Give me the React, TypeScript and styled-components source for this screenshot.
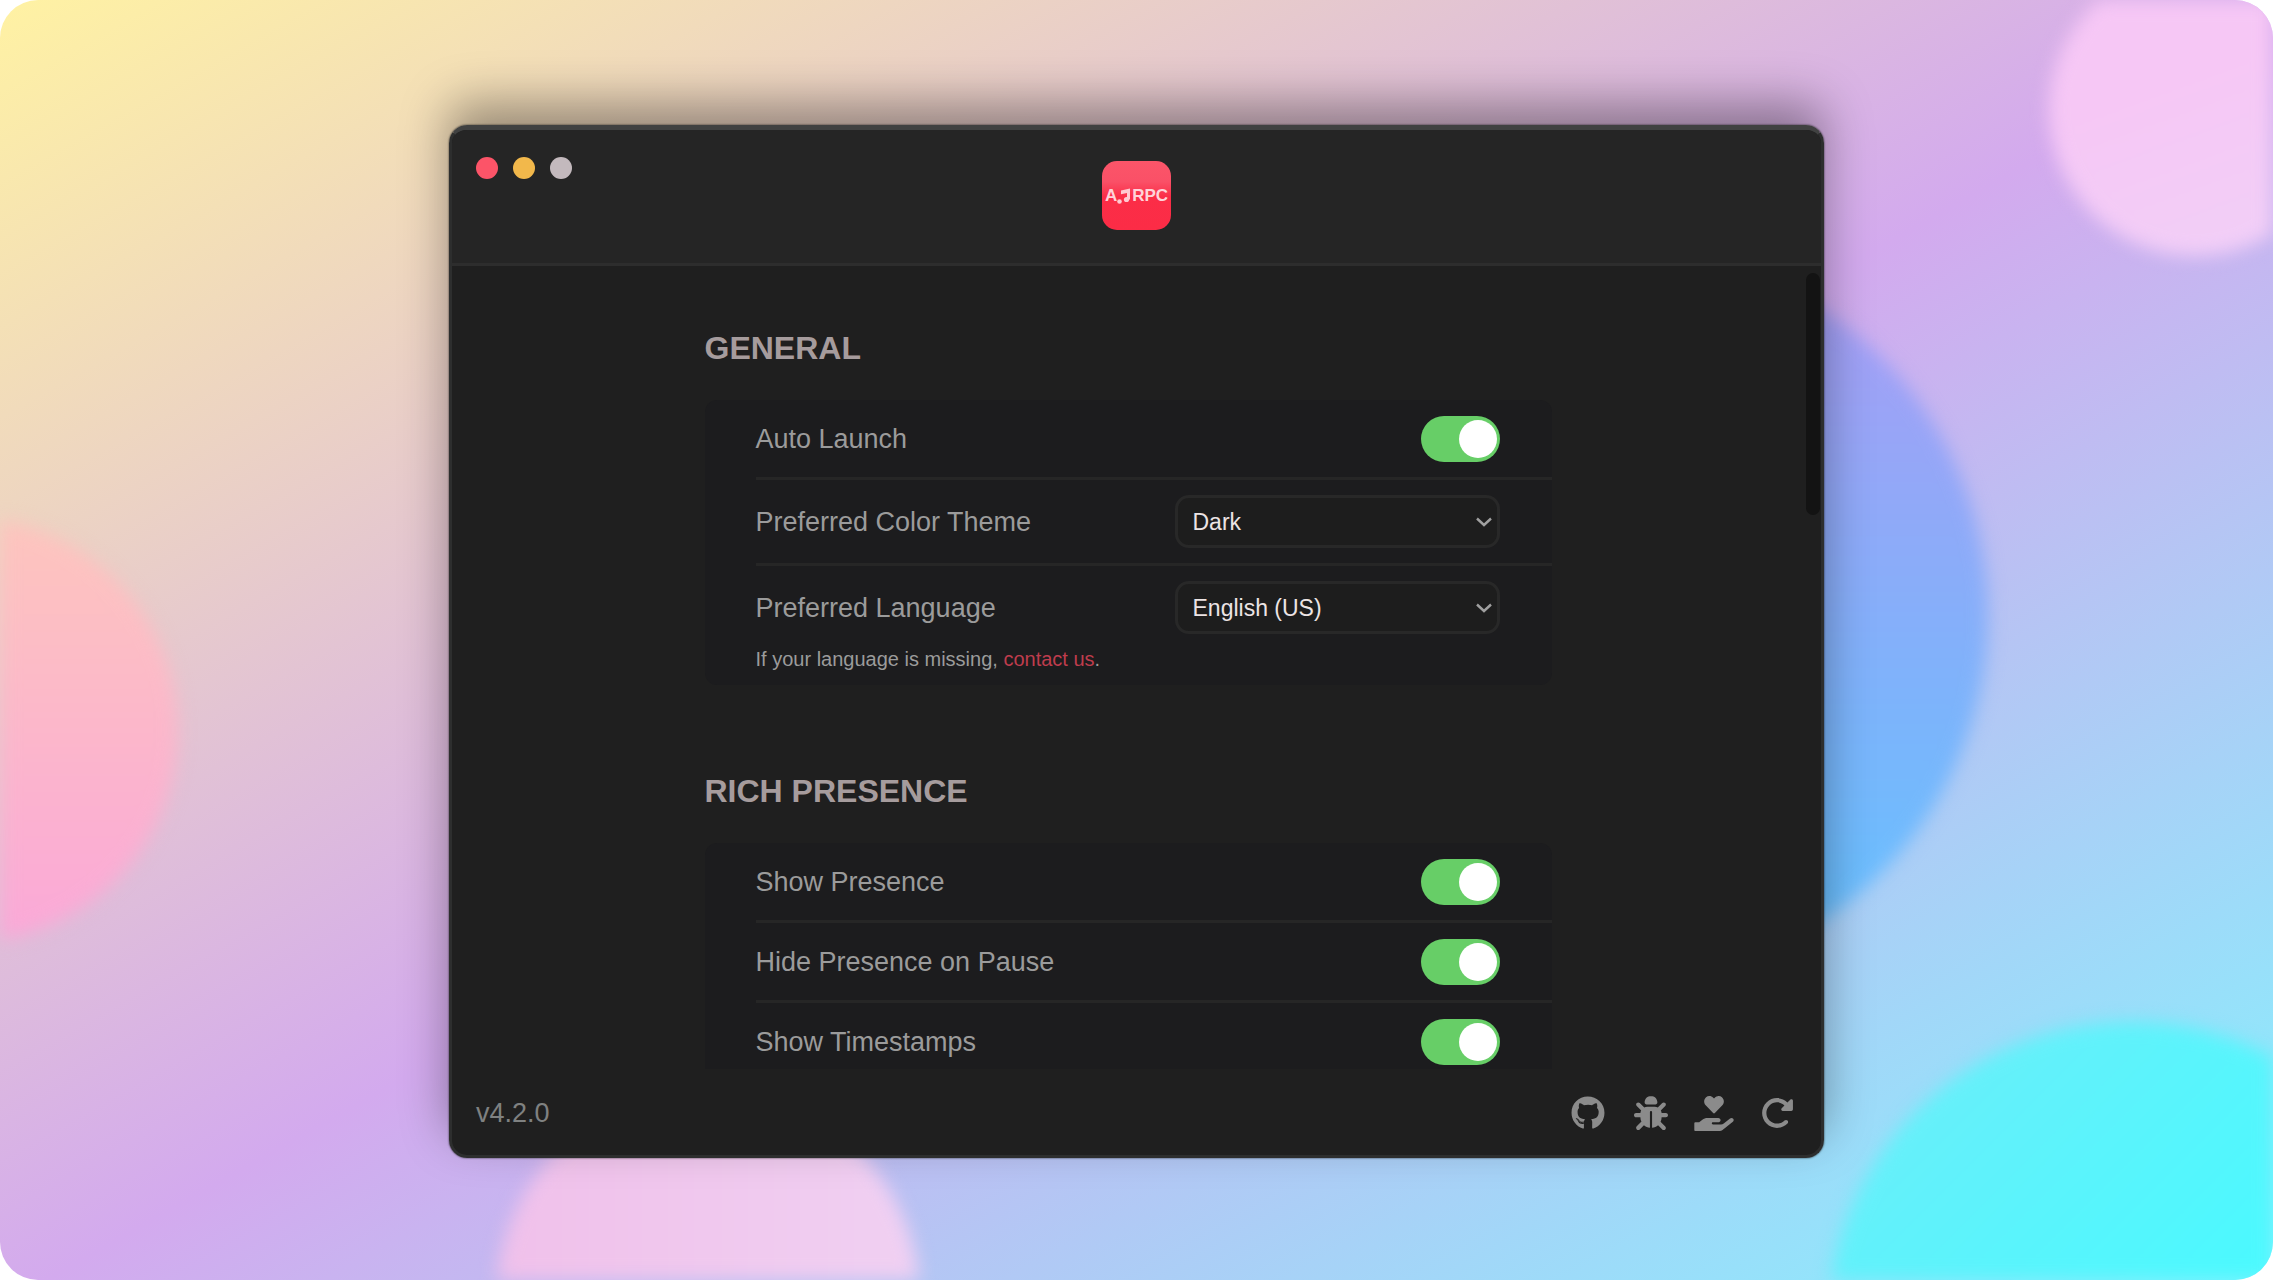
import React from "react";
import styled, { createGlobalStyle } from "styled-components";
import { FaHandHoldingHeart } from "react-icons/fa";
import { FaBug, FaGithub, FaRotateRight } from "react-icons/fa6";

const GlobalStyle = createGlobalStyle`
  *, *::before, *::after { box-sizing: border-box; }
  body {
    margin: 0;
    background: #fff;
    font-family: "Liberation Sans", Arial, Helvetica, sans-serif;
  }
`;

const Backdrop = styled.main`
  position: relative;
  display: flex;
  justify-content: center;
  min-height: 100vh;
  padding: 125px 40px 122px;
  overflow: hidden;
  border-radius: 38px;
  background: linear-gradient(to bottom right, #fff2a3 0%, #d3aaee 51%, #84f2fe 100%);
`;

const BlobLayer = styled.div`
  position: absolute;
  inset: 0;
  overflow: hidden;
  filter: blur(9px);
`;

const Blob = styled.span<{ $size: number; $fill: string }>`
  position: absolute;
  width: ${(p) => p.$size}px;
  height: ${(p) => p.$size}px;
  border-radius: 50%;
  background: ${(p) => p.$fill};
`;

const TopBlob = styled(Blob)`
  top: -36px;
  right: -68px;
`;

const BlueBlob = styled(Blob)`
  top: 251px;
  right: 285px;
`;

const LeftBlob = styled(Blob)`
  top: 517px;
  left: -248px;
`;

const BottomBlob = styled(Blob)`
  bottom: -232px;
  left: 496px;
`;

const CyanBlob = styled(Blob)`
  right: -161px;
  bottom: -348px;
`;

const Frame = styled.div`
  position: relative;
  width: 100%;
  max-width: 1375px;
  border-radius: 18px;
  box-shadow: 0 -22px 48px rgba(0, 0, 0, 0.36), 0 0 2px rgba(0, 0, 0, 0.8);
`;

const Window = styled.section`
  display: flex;
  flex-direction: column;
  height: calc(100vh - 247px);
  overflow: hidden;
  border: 3px solid #2d2e2e;
  border-top: 5px solid #404141;
  border-radius: 18px;
  background: #1f1f1f;
`;

const TitleBar = styled.header`
  display: grid;
  grid-template-columns: 1fr auto 1fr;
  align-items: start;
  flex: none;
  height: 136px;
  padding: 27px 24px 0;
  border-bottom: 3px solid #2d2d2d;
  background: #252525;
`;

const Lights = styled.div`
  display: flex;
  gap: 15px;
`;

const Light = styled.button<{ $color: string }>`
  width: 22px;
  height: 22px;
  padding: 0;
  border: 0;
  border-radius: 50%;
  background: ${(p) => p.$color};
`;

const Logo = styled.div`
  display: flex;
  align-items: center;
  justify-content: center;
  width: 69px;
  height: 69px;
  margin-top: 4px;
  border-radius: 15px;
  background: linear-gradient(#fb5569 0%, #fa5067 30%, #fb2d47 52%, #fc2c46 100%);
  color: #ffd3da;
  font-size: 17px;
  font-weight: 700;
  line-height: 20px;
`;

const Note = styled.svg`
  flex: none;
  width: 15px;
  height: 18px;
`;

const Viewport = styled.div`
  display: flex;
  flex: 1;
  min-height: 0;
  overflow: hidden;
`;

const Content = styled.div`
  display: flex;
  flex: 1;
  flex-direction: column;
  align-items: center;
  gap: 88px;
  padding-top: 64px;
`;

const Track = styled.div`
  flex: none;
  width: 17px;
  padding: 7px 1px 0 2px;
`;

const Thumb = styled.div`
  height: 242px;
  border-radius: 7px;
  background: #131313;
`;

const Section = styled.section`
  width: 847px;
  max-width: 100%;
`;

const SectionTitle = styled.h2`
  margin: 0 0 34px;
  color: #a69c9d;
  font-size: 32px;
  font-weight: 700;
  line-height: 36px;
`;

const Card = styled.div`
  padding-left: 51px;
  border-radius: 12px;
  background: #1c1c1e;
`;

const Row = styled.div`
  display: flex;
  align-items: center;
  justify-content: space-between;
  min-height: 77px;
  padding: 15px 52px 15px 0;

  & + & {
    border-top: 3px solid #262626;
    min-height: 80px;
  }
`;

const Label = styled.label`
  color: #9b9b9b;
  font-size: 27px;
  line-height: 32px;
`;

const Switch = styled.input`
  display: flex;
  justify-content: flex-start;
  width: 79px;
  height: 46px;
  margin: 0;
  padding: 4px 3px;
  border-radius: 23px;
  appearance: none;
  background: #424244;

  &::before {
    width: 38px;
    height: 38px;
    border-radius: 50%;
    background: #fff;
    content: "";
  }

  &:checked {
    justify-content: flex-end;
    background: #67ce67;
  }
`;

const SelectBox = styled.div`
  display: grid;
  align-items: center;
  width: 325px;
  height: 53px;
`;

const Select = styled.select`
  grid-area: 1 / 1;
  width: 100%;
  height: 53px;
  padding: 0 40px 0 15px;
  border: 3px solid #282828;
  border-radius: 14px;
  appearance: none;
  background: #1d1d1d;
  color: #ece4e4;
  font-family: inherit;
  font-size: 23px;
`;

const Chevron = styled.svg`
  grid-area: 1 / 1;
  justify-self: end;
  width: 16px;
  height: 10px;
  margin-right: 8px;
  pointer-events: none;
`;

const Hint = styled.p`
  margin: 0;
  padding-bottom: 16px;
  color: #9b9b9b;
  font-size: 20px;
  line-height: 20px;
`;

const HintLink = styled.a`
  color: #bf3c4d;
  text-decoration: none;
`;

const StatusBar = styled.footer`
  display: flex;
  align-items: center;
  justify-content: space-between;
  flex: none;
  height: 86px;
  padding: 2px 24px 0;
`;

const Version = styled.span`
  color: #7f8181;
  font-size: 27px;
  line-height: 32px;
`;

const Actions = styled.div`
  display: flex;
  gap: 23px;
`;

const Action = styled.button`
  display: flex;
  align-items: center;
  justify-content: center;
  width: 40px;
  height: 40px;
  padding: 0;
  border: 0;
  background: none;
  color: #8b8b8b;
  font-size: 34px;
`;

const HeartHand = styled(FaHandHoldingHeart)`
  flex: none;
  width: 40px;
  height: 35px;
`;

type SwitchRowProps = { id: string; label: string };

const SwitchRow = ({ id, label }: SwitchRowProps) => (
  <Row>
    <Label htmlFor={id}>{label}</Label>
    <Switch id={id} type="checkbox" defaultChecked />
  </Row>
);

type SelectRowProps = { id: string; label: string; options: string[] };

const SelectRow = ({ id, label, options }: SelectRowProps) => (
  <Row>
    <Label htmlFor={id}>{label}</Label>
    <SelectBox>
      <Select id={id} defaultValue={options[0]}>
        {options.map((option) => (
          <option key={option}>{option}</option>
        ))}
      </Select>
      <Chevron viewBox="0 0 16 10" fill="none" stroke="#a0a0a0" strokeWidth="2.4" aria-hidden="true">
        <path d="M1 1.500 8 8l7-6.500" />
      </Chevron>
    </SelectBox>
  </Row>
);

export default function App() {
  return (
    <>
      <GlobalStyle />
      <Backdrop>
        <BlobLayer>
          <TopBlob $size={292} $fill="linear-gradient(160deg, #f6c7f5 40%, #f0d0f7)" />
          <BlueBlob $size={728} $fill="linear-gradient(#a99bf4, #62c2ff)" />
          <LeftBlob $size={426} $fill="linear-gradient(#fdc5bd, #faa8d8)" />
          <BottomBlob $size={424} $fill="linear-gradient(to right, #f0c0ea, #f0d0f2)" />
          <CyanBlob $size={606} $fill="linear-gradient(135deg, #70ecf8, #48faff 60%)" />
        </BlobLayer>
        <Frame>
          <Window>
            <TitleBar>
              <Lights>
                <Light $color="#fc5468" aria-label="Close" />
                <Light $color="#f2b84b" aria-label="Minimize" />
                <Light $color="#c3b9bd" aria-label="Zoom" />
              </Lights>
              <Logo>
                A
                <Note viewBox="0 0 15 18" fill="#ffc9d1" aria-hidden="true">
                  <path d="M4 3.500 13 1.500v11h-3V6L4 7.200z" />
                  <circle cx="9.500" cy="12.500" r="2.600" />
                  <circle cx="2.500" cy="14.500" r="2.300" />
                </Note>
                RPC
              </Logo>
            </TitleBar>
            <Viewport>
              <Content>
                <Section>
                  <SectionTitle>GENERAL</SectionTitle>
                  <Card>
                    <SwitchRow id="auto-launch" label="Auto Launch" />
                    <SelectRow id="theme" label="Preferred Color Theme" options={["Dark", "Light"]} />
                    <SelectRow id="language" label="Preferred Language" options={["English (US)"]} />
                    <Hint>
                      If your language is missing, <HintLink href="#contact">contact us</HintLink>.
                    </Hint>
                  </Card>
                </Section>
                <Section>
                  <SectionTitle>RICH PRESENCE</SectionTitle>
                  <Card>
                    <SwitchRow id="show-presence" label="Show Presence" />
                    <SwitchRow id="hide-on-pause" label="Hide Presence on Pause" />
                    <SwitchRow id="timestamps" label="Show Timestamps" />
                  </Card>
                </Section>
              </Content>
              <Track>
                <Thumb />
              </Track>
            </Viewport>
            <StatusBar>
              <Version>v4.2.0</Version>
              <Actions>
                <Action aria-label="GitHub"><FaGithub /></Action>
                <Action aria-label="Report a bug"><FaBug /></Action>
                <Action aria-label="Donate"><HeartHand /></Action>
                <Action aria-label="Reload"><FaRotateRight /></Action>
              </Actions>
            </StatusBar>
          </Window>
        </Frame>
      </Backdrop>
    </>
  );
}
